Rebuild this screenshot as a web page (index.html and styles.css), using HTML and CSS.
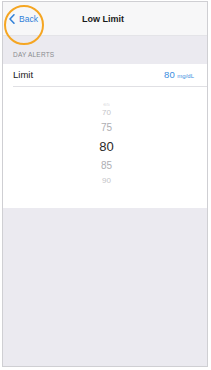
FILE: index.html
```html
<!DOCTYPE html>
<html>
<head>
<meta charset="utf-8">
<link rel="stylesheet" href="styles.css">
</head>
<body>
<div class="phone">
  <div class="nav">
    <div class="back">
      <svg class="chev" width="6" height="10" viewBox="0 0 6 10"><path d="M5 0.8 L1 5 L5 9.2" fill="none" stroke="#2f7fd8" stroke-width="1.5" stroke-linecap="round" stroke-linejoin="round"/></svg>
      <span>Back</span>
    </div>
    <div class="title">Low Limit</div>
    <div class="spacer"></div>
  </div>
  <div class="group-header">DAY ALERTS</div>
  <div class="row">
    <span class="label">Limit</span>
    <span class="value"><b>80</b> <small>mg/dL</small></span>
  </div>
  <div class="picker">
    <div class="sep"></div>
    <div class="wheel">
      <div class="n n65">65</div>
      <div class="n n70">70</div>
      <div class="n n75">75</div>
      <div class="n n80">80</div>
      <div class="n n85">85</div>
      <div class="n n90">90</div>
    </div>
  </div>
  <div class="fill"></div>
  <div class="ring"></div>
</div>
</body>
</html>
```
FILE: styles.css
```css
html, body { margin: 0; padding: 0; background: #fff; }
body { font-family: "Liberation Sans", Arial, sans-serif; }
.phone {
  position: relative;
  margin: 1px 3px 0 2px;
  width: 204px;
  height: 364px;
  border: 1px solid #cfcfd3;
  display: flex;
  flex-direction: column;
  background: #ebeaf0;
  overflow: hidden;
}
.nav {
  height: 32px;
  background: #f7f7f8;
  display: flex;
  align-items: center;
  padding: 1px 6px 0 6px;
  border-bottom: 1px solid #e4e4e8;
}
.back {
  display: flex;
  align-items: center;
  gap: 4px;
  color: #2f7fd8;
  font-size: 8.5px;
  width: 50px;
}
.chev { display: block; }
.title {
  flex: 1;
  text-align: center;
  font-size: 9px;
  font-weight: bold;
  color: #1a1a1a;
  margin-left: -4px;
}
.spacer { width: 50px; }
.group-header {
  height: 28px;
  box-sizing: border-box;
  padding: 15px 0 0 10px;
  font-size: 6.5px;
  color: #8a8a8f;
  letter-spacing: 0.2px;
  background: #ebeaf0;
}
.row {
  height: 22px;
  background: #fff;
  display: flex;
  align-items: center;
  justify-content: space-between;
  padding: 0 13px 0 10px;
}
.label { font-size: 9.5px; color: #1a1a1a; margin-top: -2px; }
.value { color: #3a8ee0; font-size: 9.5px; margin-top: -2px; }
.value b { font-weight: normal; }
.value small { font-size: 6px; }
.picker {
  background: #fff;
  height: 122px;
  display: flex;
  flex-direction: column;
}
.sep { height: 1px; background: #e0e0e4; margin-left: 10px; }
.wheel {
  flex: 1;
  display: flex;
  flex-direction: column;
  align-items: center;
  padding-left: 3px;
  padding-top: 15px;
}
.n { line-height: 1; color: #b8b8bc; }
.n65 { font-size: 6px; height: 5px; overflow: hidden; color: #d2d2d6; transform: scaleY(0.5); }
.n70 { font-size: 8px; margin-top: 2px; color: #c4c4c8; }
.n75 { font-size: 10px; margin-top: 6px; color: #aeaeb2; }
.n80 { font-size: 13px; margin-top: 7px; color: #2a2a2a; }
.n85 { font-size: 10px; margin-top: 8px; color: #aeaeb2; }
.n90 { font-size: 8px; margin-top: 6px; color: #c4c4c8; }
.fill { flex: 1; background: #ebeaf0; }
.ring {
  position: absolute;
  left: 1px;
  top: 3px;
  width: 36px;
  height: 36px;
  border: 2px solid #f5a623;
  border-radius: 50%;
}
```
